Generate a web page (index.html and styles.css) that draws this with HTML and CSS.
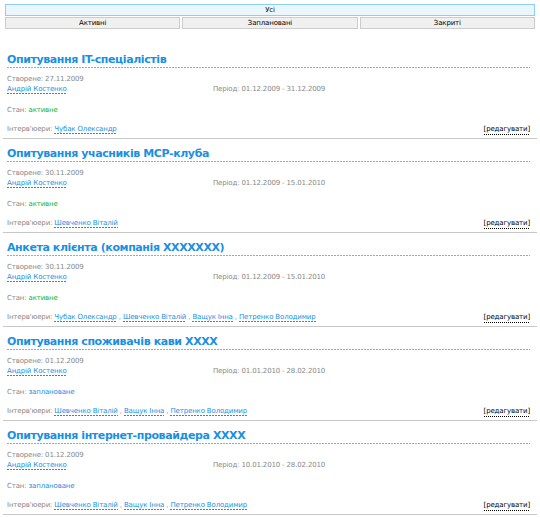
FILE: index.html
```html
<!DOCTYPE html>
<html>
<head>
<meta charset="utf-8">
<link rel="stylesheet" href="styles.css">
</head>
<body>
<div class="page">
  <div class="tab-all">Усі</div>
  <div class="tabs">
    <div class="tab">Активні</div>
    <div class="tab">Заплановані</div>
    <div class="tab">Закриті</div>
  </div>

  <div class="list">
  <div class="item">
    <div class="title">Опитування IT-спеціалістів</div>
    <div class="meta">
      <div class="created">Створене: 27.11.2009</div>
      <div class="row"><span class="author"><a class="link">Андрій Костенко</a></span><span class="period">Період: 01.12.2009 - 31.12.2009</span></div>
    </div>
    <div class="state">Стан: <span class="active">активне</span></div>
    <div class="people"><span>Інтерв'юери: <a class="link">Чубак Олександр</a></span><a class="edit">[редагувати]</a></div>
  </div>

  <div class="item">
    <div class="title">Опитування учасників MCP-клуба</div>
    <div class="meta">
      <div class="created">Створене: 30.11.2009</div>
      <div class="row"><span class="author"><a class="link">Андрій Костенко</a></span><span class="period">Період: 01.12.2009 - 15.01.2010</span></div>
    </div>
    <div class="state">Стан: <span class="active">активне</span></div>
    <div class="people"><span>Інтерв'юери: <a class="link">Шевченко Віталій</a></span><a class="edit">[редагувати]</a></div>
  </div>

  <div class="item">
    <div class="title">Анкета клієнта (компанія XXXXXXX)</div>
    <div class="meta">
      <div class="created">Створене: 30.11.2009</div>
      <div class="row"><span class="author"><a class="link">Андрій Костенко</a></span><span class="period">Період: 01.12.2009 - 15.01.2010</span></div>
    </div>
    <div class="state">Стан: <span class="active">активне</span></div>
    <div class="people"><span>Інтерв'юери: <a class="link">Чубак Олександр</a> , <a class="link">Шевченко Віталій</a> , <a class="link">Ващук Інна</a> , <a class="link">Петренко Володимир</a></span><a class="edit">[редагувати]</a></div>
  </div>

  <div class="item">
    <div class="title">Опитування споживачів кави XXXX</div>
    <div class="meta">
      <div class="created">Створене: 01.12.2009</div>
      <div class="row"><span class="author"><a class="link">Андрій Костенко</a></span><span class="period">Період: 01.01.2010 - 28.02.2010</span></div>
    </div>
    <div class="state">Стан: <span class="planned">заплановане</span></div>
    <div class="people"><span>Інтерв'юери: <a class="link">Шевченко Віталій</a> , <a class="link">Ващук Інна</a> , <a class="link">Петренко Володимир</a></span><a class="edit">[редагувати]</a></div>
  </div>

  <div class="item">
    <div class="title">Опитування інтернет-провайдера XXXX</div>
    <div class="meta">
      <div class="created">Створене: 01.12.2009</div>
      <div class="row"><span class="author"><a class="link">Андрій Костенко</a></span><span class="period">Період: 10.01.2010 - 28.02.2010</span></div>
    </div>
    <div class="state">Стан: <span class="planned">заплановане</span></div>
    <div class="people"><span>Інтерв'юери: <a class="link">Шевченко Віталій</a> , <a class="link">Ващук Інна</a> , <a class="link">Петренко Володимир</a></span><a class="edit">[редагувати]</a></div>
  </div>
  </div>
</div>
</body>
</html>
```

FILE: styles.css
```css
html, body {
  margin: 0;
  padding: 0;
  background: #ffffff;
}
body {
  font-family: "DejaVu Sans", Verdana, sans-serif;
  font-size: 7px;
  letter-spacing: -0.15px;
  color: #888888;
}
.page {
  padding: 4px 5px 0 5px;
}
.tab-all {
  height: 10px;
  line-height: 10px;
  border: 1px solid #8ccff5;
  background: #eaf6fc;
  color: #000;
  text-align: center;
}
.tabs {
  display: grid;
  grid-template-columns: 1fr 1fr 1fr;
  column-gap: 2px;
  margin-top: 1px;
}
.tab {
  height: 10px;
  line-height: 10px;
  border: 1px solid #cccccc;
  background: #f0f0f0;
  color: #000;
  text-align: center;
}
.list {
  display: flex;
  flex-direction: column;
  row-gap: 8px;
  margin-top: 24px;
}
.item {
  padding: 0 0 3px 0;
  border-bottom: 1px solid #c8c8c8;
  margin: 0 -2px;
}
.title {
  margin: 0 7px 0 4px;
  padding-bottom: 1px;
  font-size: 11px;
  font-weight: bold;
  line-height: 14px;
  color: #1a8fe3;
  background-image: repeating-linear-gradient(to right, #5cbdf2 0, #5cbdf2 2px, transparent 2px, transparent 3px);
  background-size: 100% 1px;
  background-repeat: no-repeat;
  background-position: left bottom;
  letter-spacing: -0.4px;
}
.meta {
  margin: 6px 0 0 4px;
  line-height: 10px;
}
.row {
  display: flex;
}
.author {
  width: 206px;
}
.link {
  color: #1a8fe3;
  text-decoration: none;
  padding-bottom: 1px;
  background-image: repeating-linear-gradient(to right, #1a8fe3 0, #1a8fe3 2px, transparent 2px, transparent 3px);
  background-size: 100% 1px;
  background-repeat: no-repeat;
  background-position: left bottom;
}
.state {
  margin: 11px 0 0 4px;
  line-height: 10px;
}
.active {
  color: #20b020;
}
.planned {
  color: #1a8fe3;
}
.people {
  margin: 9px 7px 0 4px;
  line-height: 10px;
  display: flex;
  justify-content: space-between;
}
.edit {
  color: #000;
  padding-bottom: 1px;
  background-image: repeating-linear-gradient(to right, #000 0, #000 1px, transparent 1px, transparent 2px);
  background-size: 100% 1px;
  background-repeat: no-repeat;
  background-position: left bottom;
}
```
